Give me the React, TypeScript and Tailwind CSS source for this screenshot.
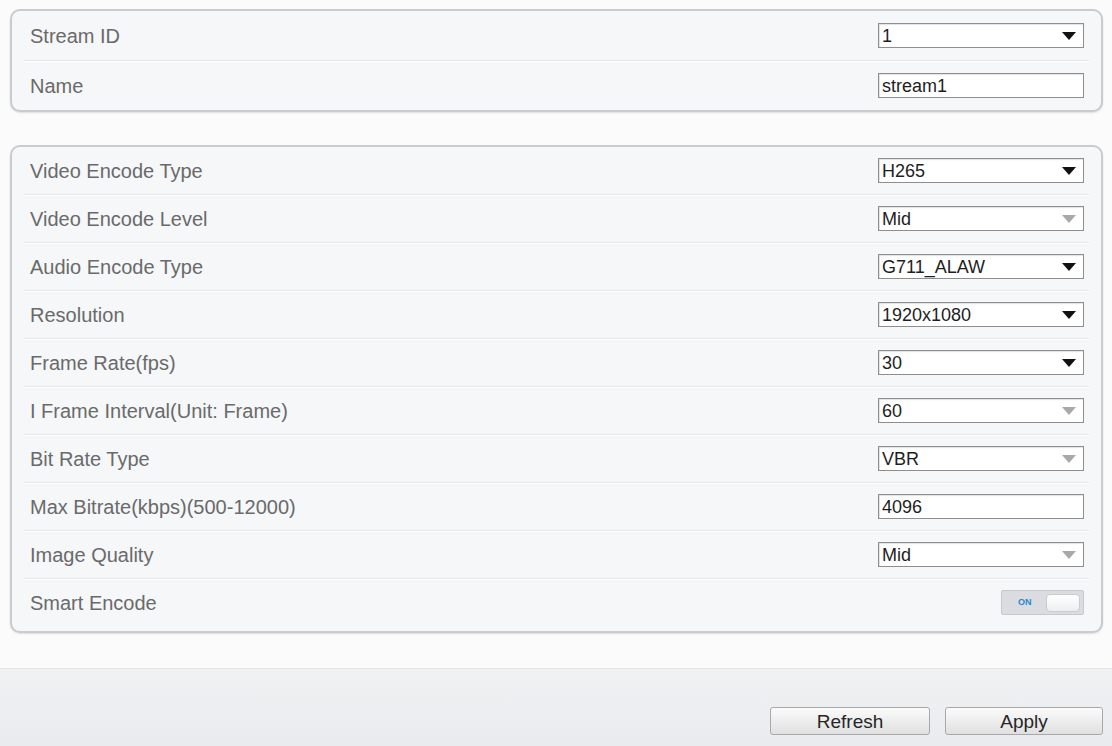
import React from "react";

type Field =
  | { label: string; kind: "select"; value: string; disabled?: boolean }
  | { label: string; kind: "text"; value: string }
  | { label: string; kind: "toggle"; on: boolean };

const streamFields: Field[] = [
  { label: "Stream ID", kind: "select", value: "1" },
  { label: "Name", kind: "text", value: "stream1" },
];

const encodeFields: Field[] = [
  { label: "Video Encode Type", kind: "select", value: "H265" },
  { label: "Video Encode Level", kind: "select", value: "Mid", disabled: true },
  { label: "Audio Encode Type", kind: "select", value: "G711_ALAW" },
  { label: "Resolution", kind: "select", value: "1920x1080" },
  { label: "Frame Rate(fps)", kind: "select", value: "30" },
  { label: "I Frame Interval(Unit: Frame)", kind: "select", value: "60", disabled: true },
  { label: "Bit Rate Type", kind: "select", value: "VBR", disabled: true },
  { label: "Max Bitrate(kbps)(500-12000)", kind: "text", value: "4096" },
  { label: "Image Quality", kind: "select", value: "Mid", disabled: true },
  { label: "Smart Encode", kind: "toggle", on: true },
];

function SelectBox({ value, disabled }: { value: string; disabled?: boolean }) {
  return (
    <div className="flex h-[25px] w-[206px] items-center justify-between border border-[#8e8e8e] bg-white pl-[3px] pr-[7px] shadow-[inset_1px_1px_1px_rgba(0,0,0,0.12)]">
      <span className="text-[18px] leading-none text-[#1e1e1e]">{value}</span>
      <svg width="14" height="8" viewBox="0 0 14 8">
        <path d="M0 0 L14 0 L7 8 Z" fill={disabled ? "#a9a9a9" : "#111"} />
      </svg>
    </div>
  );
}

function TextBox({ value }: { value: string }) {
  return (
    <div className="flex h-[25px] w-[206px] items-center border border-[#8e8e8e] bg-white pl-[3px] shadow-[inset_1px_1px_1px_rgba(0,0,0,0.12)]">
      <span className="text-[18px] leading-none text-[#1e1e1e]">{value}</span>
    </div>
  );
}

function Toggle({ on }: { on: boolean }) {
  return (
    <div className="flex h-[25px] w-[83px] items-center justify-between rounded-[2px] border border-[#c6c8cb] bg-[#dadcdf] pl-[16px] pr-[3px]">
      <span className="text-[9px] font-bold leading-none text-[#2e86cc]">{on ? "ON" : "OFF"}</span>
      <div className="h-[18px] w-[34px] rounded-[4px] border border-[#c9cbce] bg-gradient-to-b from-white to-[#eceef0]" />
    </div>
  );
}

function Row({ field, height }: { field: Field; height: string }) {
  return (
    <div className={`flex items-center justify-between pl-[18px] pr-[17px] ${height}`}>
      <span className="text-[20px] leading-none text-[#6a6a6a]">{field.label}</span>
      {field.kind === "select" && <SelectBox value={field.value} disabled={field.disabled} />}
      {field.kind === "text" && <TextBox value={field.value} />}
      {field.kind === "toggle" && <Toggle on={field.on} />}
    </div>
  );
}

function Divider() {
  return <div className="mx-[12px] h-px bg-[#e3e6ea] shadow-[0_1px_0_#ffffff]" />;
}

function Panel({ fields, rowHeight, className }: { fields: Field[]; rowHeight: string; className?: string }) {
  return (
    <div
      className={`rounded-[10px] border-2 border-[#c9cccf] bg-[#f5f7f9] shadow-[0_1px_2px_rgba(0,0,0,0.12)] ${className ?? ""}`}
    >
      {fields.map((f, i) => (
        <React.Fragment key={f.label}>
          {i > 0 && <Divider />}
          <Row field={f} height={rowHeight} />
        </React.Fragment>
      ))}
    </div>
  );
}

export default function App() {
  return (
    <div
      className="flex h-[746px] w-[1112px] flex-col bg-[#fbfbfc]"
      style={{ fontFamily: '"Liberation Sans", Arial, sans-serif' }}
    >
      <div className="px-[10px] pr-[9px] pt-[9px]">
        <Panel fields={streamFields} rowHeight="h-[49px]" />
        <Panel fields={encodeFields} rowHeight="h-[47px]" className="mt-[33px] pb-[5px]" />
      </div>

      <div className="mt-[35px] flex flex-1 items-start justify-end gap-[15px] border-t border-[#e2e4e7] bg-gradient-to-b from-[#f0f1f3] to-[#e9ebee] pr-[9px] pt-[38px]">
        <button className="h-[28px] w-[160px] rounded-[3px] border border-[#a8a8a8] bg-gradient-to-b from-[#fbfbfb] to-[#e0e0e0] text-[19px] leading-none text-[#262626]">
          Refresh
        </button>
        <button className="h-[28px] w-[158px] rounded-[3px] border border-[#a8a8a8] bg-gradient-to-b from-[#fbfbfb] to-[#e0e0e0] text-[19px] leading-none text-[#262626]">
          Apply
        </button>
      </div>
    </div>
  );
}
